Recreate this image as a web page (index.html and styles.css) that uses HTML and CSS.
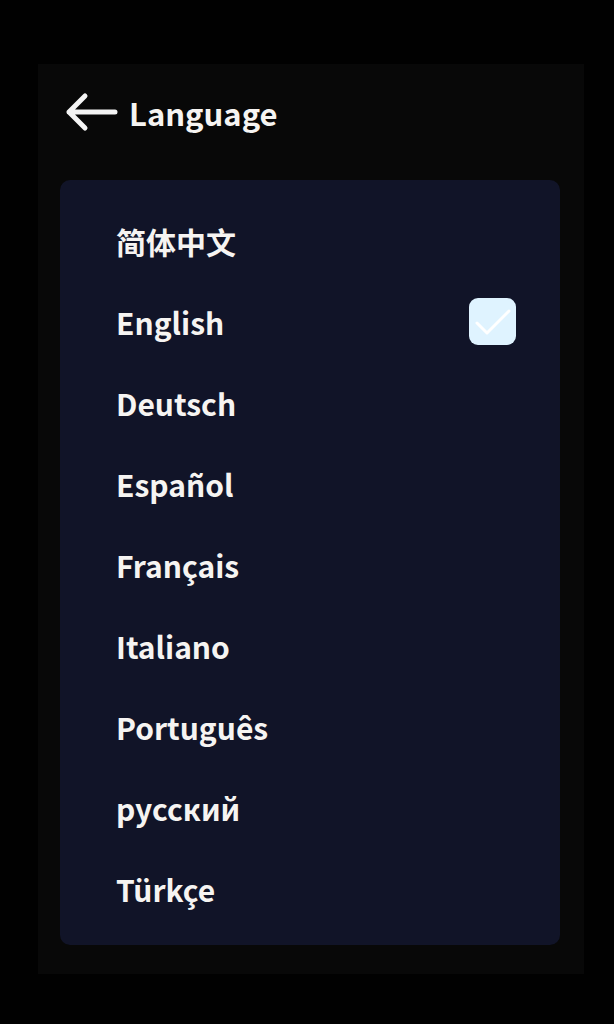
FILE: index.html
```html
<!DOCTYPE html>
<html lang="en">
<head>
<meta charset="utf-8">
<title>Language</title>
<link rel="stylesheet" href="styles.css">
</head>
<body>
<div class="screen">
  <div class="header">
    <svg class="back" width="54" height="40" viewBox="0 0 54 40" aria-hidden="true">
      <path d="M51 20 H5 M21 4 L5 20 L21 36" fill="none" stroke="#f4f4f4" stroke-width="5" stroke-linecap="round" stroke-linejoin="round"/>
    </svg>
    <span class="title">Language</span>
  </div>
  <div class="card">
    <div class="row"><span class="label">简体中文</span></div>
    <div class="row"><span class="label">English</span>
      <span class="check">
        <svg width="47" height="47" viewBox="0 0 47 47" aria-hidden="true">
          <path d="M8 25 L18 35 L40 13" fill="none" stroke="#ffffff" stroke-width="3" stroke-linecap="round" stroke-linejoin="round"/>
        </svg>
      </span>
    </div>
    <div class="row"><span class="label">Deutsch</span></div>
    <div class="row"><span class="label">Español</span></div>
    <div class="row"><span class="label">Français</span></div>
    <div class="row"><span class="label">Italiano</span></div>
    <div class="row"><span class="label">Português</span></div>
    <div class="row"><span class="label">русский</span></div>
    <div class="row"><span class="label">Türkçe</span></div>
  </div>
</div>
</body>
</html>
```
FILE: styles.css
```css
html, body {
  margin: 0;
  padding: 0;
  background: #010101;
}
body {
  width: 614px;
  height: 1024px;
  overflow: hidden;
  font-family: "Noto Sans CJK SC", "Noto Sans", sans-serif;
  color: #f6f4f2;
}
.screen {
  margin: 64px 0 0 38px;
  width: 546px;
  height: 910px;
  background: #080808;
  padding-top: 18px;
  box-sizing: border-box;
}
.header {
  height: 60px;
  display: flex;
  align-items: center;
  padding-left: 26px;
  gap: 11px;
}
.back {
  display: block;
}
.title {
  font-size: 31px;
  font-weight: 700;
  line-height: 1;
}
.card {
  margin: 38px 0 0 22px;
  width: 500px;
  height: 765px;
  box-sizing: border-box;
  padding: 20px 0 15px;
  background: #111428;
  border-radius: 10px;
}
.row {
  height: 81px;
  display: flex;
  align-items: center;
  justify-content: space-between;
  padding: 0 44px 0 56px;
}
.label {
  font-size: 30px;
  font-weight: 700;
  line-height: 1;
}
.check {
  width: 47px;
  height: 47px;
  border-radius: 9px;
  background: #dff3ff;
  display: block;
}
.check svg {
  display: block;
}
```
